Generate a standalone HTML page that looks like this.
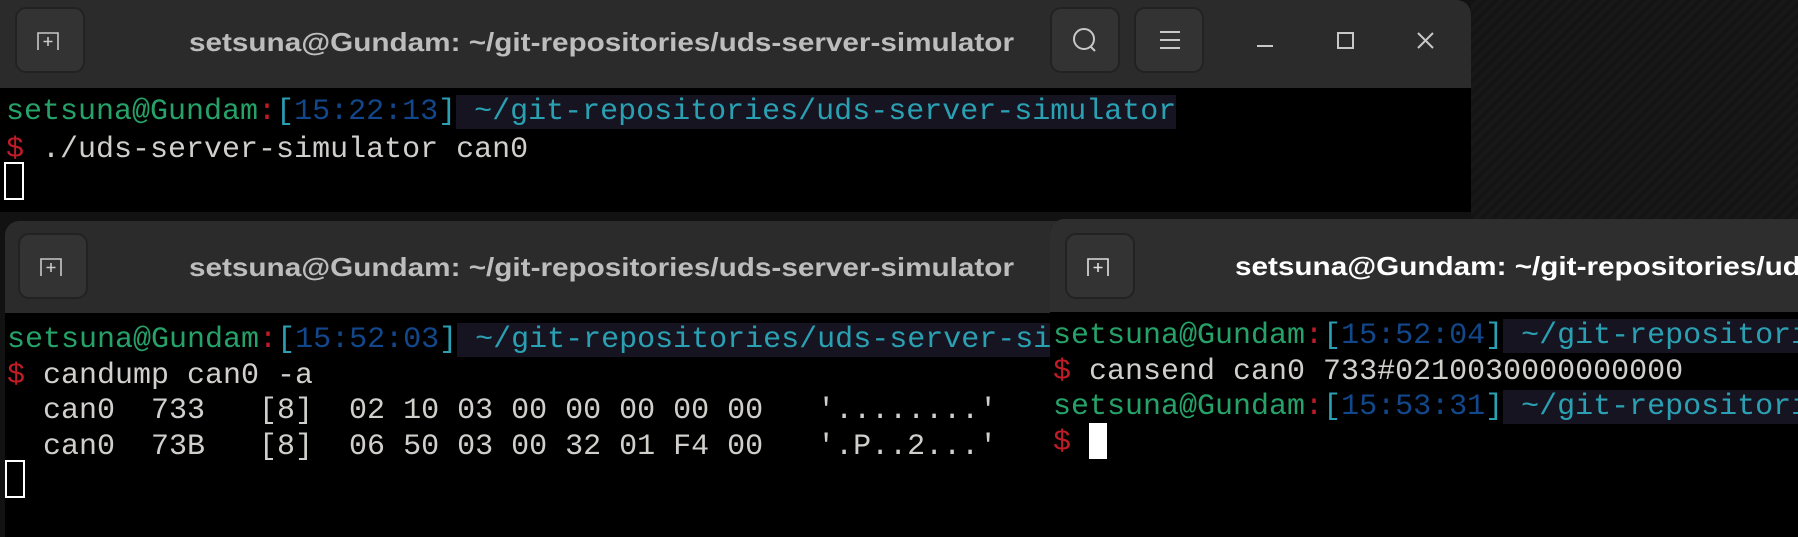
<!DOCTYPE html>
<html><head><meta charset="utf-8"><style>
*{margin:0;padding:0;box-sizing:border-box}
body{width:1798px;height:537px;overflow:hidden;background:#121212;position:relative;font-family:"Liberation Mono",monospace}
.win{position:absolute;background:#000;overflow:hidden}
.tb{position:absolute;left:0;right:0;top:0;background:#2b2b2b}
.btn{position:absolute;width:70px;height:66px;background:#333;border:2px solid #222;border-radius:11px}
.t{position:absolute;left:6px;white-space:pre;font-size:30px;line-height:36px;color:#d0cfcc}
.g{color:#26a269}.r{color:#c01c28}.c{color:#2aa1b3}.b{color:#12488b}.hl{background:#171421;color:#2aa1b3}
</style></head><body>
<div style="position:absolute;left:1471px;top:0;width:327px;height:220px;background:repeating-linear-gradient(135deg,#141414 0 4px,#181818 4px 8px)"></div>

<!-- window 1 -->
<div class="win" style="left:0;top:0;width:1471px;height:212px;border-top-right-radius:14px">
 <div class="tb" style="height:88px">
  <div class="btn" style="left:15px;top:7px"><svg width="66" height="62"><path d="M21 41V24h20v17M31 28v9M26.5 32.5h9" stroke="#c8c8c8" stroke-width="1.6" fill="none"/></svg></div>
  <svg style="position:absolute;left:189px;top:22px" width="830" height="40"><text x="0" y="29" font-family="Liberation Sans,sans-serif" font-weight="bold" font-size="26" fill="#bdbdbd" textLength="825" lengthAdjust="spacingAndGlyphs">setsuna@Gundam: ~/git-repositories/uds-server-simulator</text></svg>
  <div class="btn" style="left:1050px;top:7px"><svg width="66" height="62"><circle cx="32" cy="30" r="10" stroke="#c8c8c8" stroke-width="2" fill="none"/><path d="M38 37l5 5" stroke="#c8c8c8" stroke-width="2"/></svg></div>
  <div class="btn" style="left:1134px;top:7px"><svg width="66" height="62"><path d="M24 23h20M24 31h20M24 39h20" stroke="#c8c8c8" stroke-width="2"/></svg></div>
  <svg style="position:absolute;left:1250px;top:25px" width="200" height="35"><path d="M7 21h16" stroke="#c8c8c8" stroke-width="2"/><rect x="88" y="8" width="15" height="15" stroke="#c8c8c8" stroke-width="2" fill="none"/><path d="M168 8l15 15M183 8l-15 15" stroke="#c8c8c8" stroke-width="2"/></svg>
 </div>
 <div class="t" style="top:93px;line-height:38px"><span class="g">setsuna@Gundam</span><span class="r">:</span><span class="c">[</span><span class="b">15:22:13</span><span class="c">]</span><span class="hl"> ~/git-repositories/uds-server-simulator</span>
<span class="r">$</span> ./uds-server-simulator can0</div>
 <div style="position:absolute;left:4px;top:162px;width:20px;height:38px;border:2px solid #fff"></div>
</div>

<!-- window 2 -->
<div class="win" style="left:5px;top:221px;width:1100px;height:316px;border-top-left-radius:14px">
 <div class="tb" style="height:92px">
  <div class="btn" style="left:13px;top:12px"><svg width="66" height="62"><path d="M21 41V24h20v17M31 28v9M26.5 32.5h9" stroke="#c8c8c8" stroke-width="1.6" fill="none"/></svg></div>
  <svg style="position:absolute;left:184px;top:26px" width="830" height="40"><text x="0" y="29" font-family="Liberation Sans,sans-serif" font-weight="bold" font-size="26" fill="#bdbdbd" textLength="825" lengthAdjust="spacingAndGlyphs">setsuna@Gundam: ~/git-repositories/uds-server-simulator</text></svg>
 </div>
 <div class="t" style="top:102px;left:2px;line-height:35.5px"><span class="g">setsuna@Gundam</span><span class="r">:</span><span class="c">[</span><span class="b">15:52:03</span><span class="c">]</span><span class="hl"> ~/git-repositories/uds-server-simulator</span>
<span class="r">$</span> candump can0 -a
  can0  733   [8]  02 10 03 00 00 00 00 00   '........'
  can0  73B   [8]  06 50 03 00 32 01 F4 00   '.P..2...'</div>
 <div style="position:absolute;left:0;top:239px;width:20px;height:38px;border:2px solid #fff"></div>
</div>

<!-- window 3 -->
<div class="win" style="left:1050px;top:219px;width:760px;height:318px;border-top-left-radius:14px">
 <div class="tb" style="height:93px;background:#2e2e2e">
  <div class="btn" style="left:15px;top:14px"><svg width="66" height="62"><path d="M21 41V24h20v17M31 28v9M26.5 32.5h9" stroke="#e0e0e0" stroke-width="1.6" fill="none"/></svg></div>
  <svg style="position:absolute;left:185px;top:27px" width="830" height="40"><text x="0" y="29" font-family="Liberation Sans,sans-serif" font-weight="bold" font-size="26" fill="#ffffff" textLength="825" lengthAdjust="spacingAndGlyphs">setsuna@Gundam: ~/git-repositories/uds-server-simulator</text></svg>
 </div>
 <div class="t" style="top:100px;left:3px;line-height:35.5px"><span class="g">setsuna@Gundam</span><span class="r">:</span><span class="c">[</span><span class="b">15:52:04</span><span class="c">]</span><span class="hl"> ~/git-repositories/uds-server-simulator</span>
<span class="r">$</span> cansend can0 733#0210030000000000
<span class="g">setsuna@Gundam</span><span class="r">:</span><span class="c">[</span><span class="b">15:53:31</span><span class="c">]</span><span class="hl"> ~/git-repositories/uds-server-simulator</span>
<span class="r">$</span> </div>
 <div style="position:absolute;left:39px;top:204px;width:18px;height:36px;background:#fff"></div>
</div>
</body></html>
